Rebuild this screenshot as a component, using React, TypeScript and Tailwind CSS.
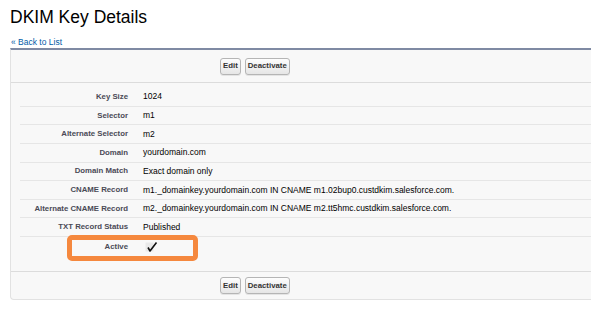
const rows: { label: string; value: string }[] = [
  { label: 'Key Size', value: '1024' },
  { label: 'Selector', value: 'm1' },
  { label: 'Alternate Selector', value: 'm2' },
  { label: 'Domain', value: 'yourdomain.com' },
  { label: 'Domain Match', value: 'Exact domain only' },
  { label: 'CNAME Record', value: 'm1._domainkey.yourdomain.com IN CNAME m1.02bup0.custdkim.salesforce.com.' },
  { label: 'Alternate CNAME Record', value: 'm2._domainkey.yourdomain.com IN CNAME m2.tt5hmc.custdkim.salesforce.com.' },
  { label: 'TXT Record Status', value: 'Published' },
]

function Btn({ children }: { children: string }) {
  return (
    <button
      type="button"
      className="h-[17px] rounded-[3px] border border-[#b5b5b5] bg-gradient-to-b from-[#fdfdfd] to-[#e6e6e6] px-[2px] text-[7.8px] font-bold leading-none text-[#333] shadow-[0_1px_0_rgba(0,0,0,0.08)]"
    >
      {children}
    </button>
  )
}

function Buttons() {
  return (
    <div className="flex gap-[4px]">
      <Btn>Edit</Btn>
      <Btn>Deactivate</Btn>
    </div>
  )
}

export default function App() {
  return (
    <div className="relative h-[316px] w-[591px] overflow-hidden bg-white font-['Liberation_Sans',Arial,sans-serif]">
      <h1 className="ml-[10px] mt-[7px] text-[17.5px] font-normal leading-[20px] text-black">DKIM Key Details</h1>
      <a href="#" className="ml-[11px] mt-[10px] block w-fit text-[8.5px] leading-[10px] text-[#015ba7]">
        « Back to List
      </a>

      <div className="ml-[10px] mt-[1px] w-[620px] rounded-bl-[4px] border-b border-l border-t-2 border-[#e2e2e2] border-t-[#7f8aa3] bg-[#f8f8f8]">
        <div className="flex h-[33px] items-center border-b border-[#dcdcdc] pl-[209px]">
          <Buttons />
        </div>

        <div className="pb-[15px] pt-[5px]">
          {rows.map((r) => (
            <div key={r.label} className="ml-[9px] flex h-[18.625px] items-center border-b border-[#e6e6e6]">
              <div className="w-[108px] text-right text-[7.8px] font-bold text-[#4a4a56]">{r.label}</div>
              <div className="pl-[15px] text-[8.5px] text-black">{r.value}</div>
            </div>
          ))}
          <div className="ml-[9px] flex h-[19px] items-center">
            <div className="w-[108px] text-right text-[7.8px] font-bold text-[#4a4a56]">Active</div>
            <div className="pl-[15px]">
              <svg width="16" height="12" viewBox="0 0 16 12" className="block">
                <rect x="2.5" y="1.5" width="8" height="9" fill="#e9e9e9" />
                <path d="M5 6.5 L7 10 L13.5 1.5" fill="none" stroke="#111" strokeWidth="1.6" strokeLinejoin="round" />
              </svg>
            </div>
          </div>
        </div>

        <div className="flex h-[28px] items-center border-t border-[#dcdcdc] pl-[209px]">
          <Buttons />
        </div>
      </div>

      <div className="absolute left-[67px] top-[235px] h-[26px] w-[131px] rounded-[5px] border-[5px] border-[#f5883e]" />
    </div>
  )
}
